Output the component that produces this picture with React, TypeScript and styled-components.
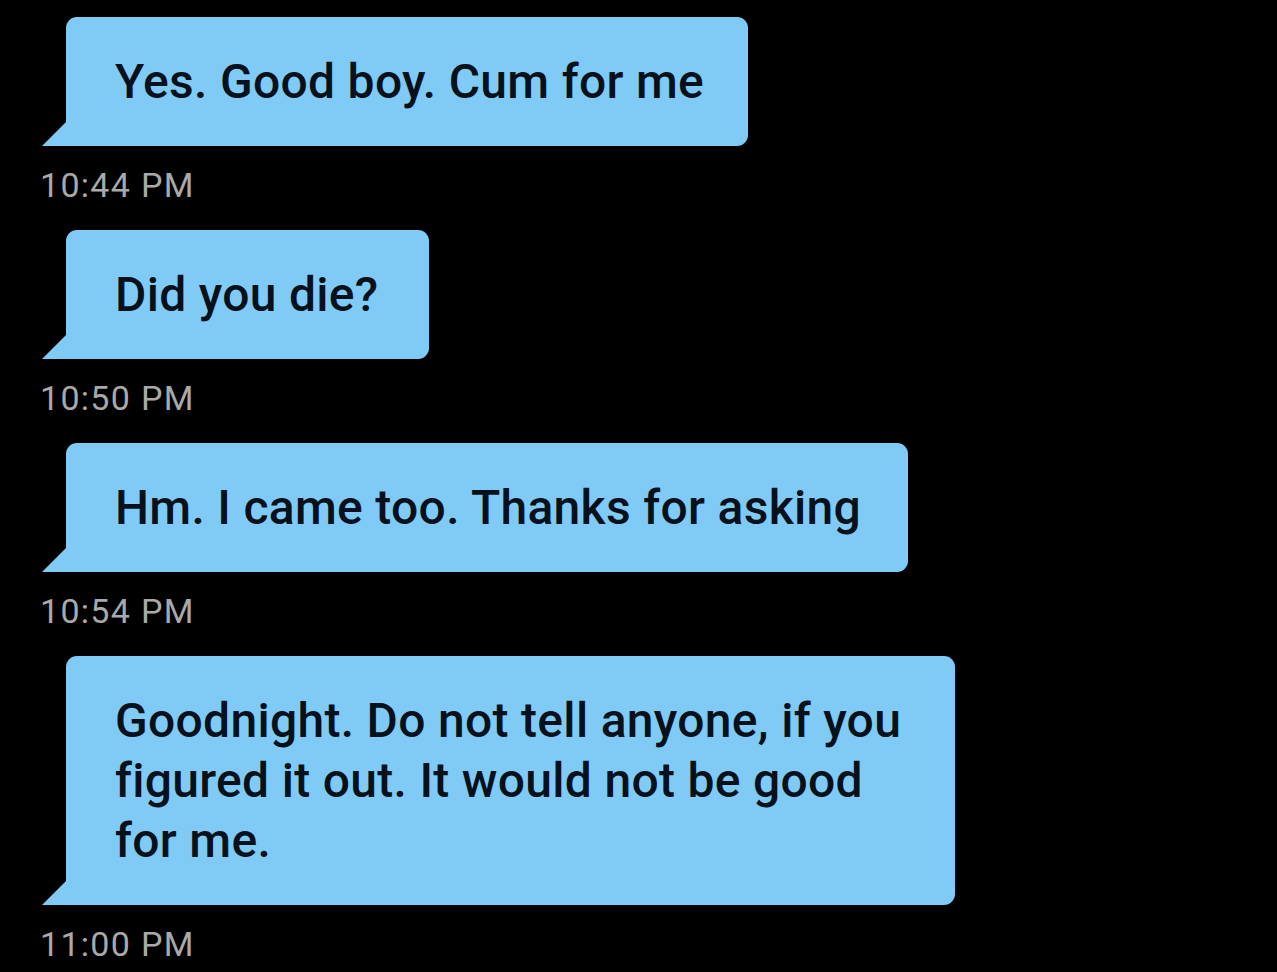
import React from "react";
import styled, { createGlobalStyle } from "styled-components";

const Global = createGlobalStyle`
  html, body { margin: 0; padding: 0; background: #000; }
  body { width: 1277px; height: 972px; overflow: hidden; }
`;

const Thread = styled.div`
  display: flex;
  flex-direction: column;
  padding: 17px 0 0 40px;
  background: #000;
  min-height: 972px;
  box-sizing: border-box;
`;

const Group = styled.div`
  display: flex;
  flex-direction: column;
  align-items: flex-start;
`;

const Bubble = styled.div<{ $w: number }>`
  position: relative;
  margin-left: 26px;
  width: ${(p) => p.$w}px;
  box-sizing: border-box;
  padding: 35px 0 34px 49px;
  background: #80cbf6;
  color: #06111c;
  border-radius: 11px 11px 11px 0;
  font-family: Roboto, "Noto Sans", sans-serif;
  font-weight: 500;
  font-size: 48px;
  line-height: 60px;
  letter-spacing: 0.3px;
  white-space: nowrap;

  &::before {
    content: "";
    position: absolute;
    left: -24px;
    bottom: 0;
    width: 24px;
    height: 24px;
    background: #80cbf6;
    clip-path: polygon(100% 0, 100% 100%, 0 100%);
  }
`;

const Time = styled.div`
  font-family: Roboto, "Noto Sans", sans-serif;
  font-weight: 400;
  font-size: 34px;
  line-height: 40px;
  letter-spacing: 1.3px;
  color: #a9a9a9;
  margin-top: 19px;
  height: 65px;
`;

const messages: { w: number; lines: string[]; time: string }[] = [
  { w: 682, lines: ["Yes. Good boy. Cum for me"], time: "10:44 PM" },
  { w: 363, lines: ["Did you die?"], time: "10:50 PM" },
  { w: 842, lines: ["Hm. I came too. Thanks for asking"], time: "10:54 PM" },
  {
    w: 889,
    lines: [
      "Goodnight. Do not tell anyone, if you",
      "figured it out. It would not be good",
      "for me.",
    ],
    time: "11:00 PM",
  },
];

export default function App() {
  return (
    <>
      <Global />
      <Thread>
        {messages.map((m) => (
          <Group key={m.time}>
            <Bubble $w={m.w}>
              {m.lines.map((l, i) => (
                <React.Fragment key={i}>
                  {i > 0 && <br />}
                  {l}
                </React.Fragment>
              ))}
            </Bubble>
            <Time>{m.time}</Time>
          </Group>
        ))}
      </Thread>
    </>
  );
}
